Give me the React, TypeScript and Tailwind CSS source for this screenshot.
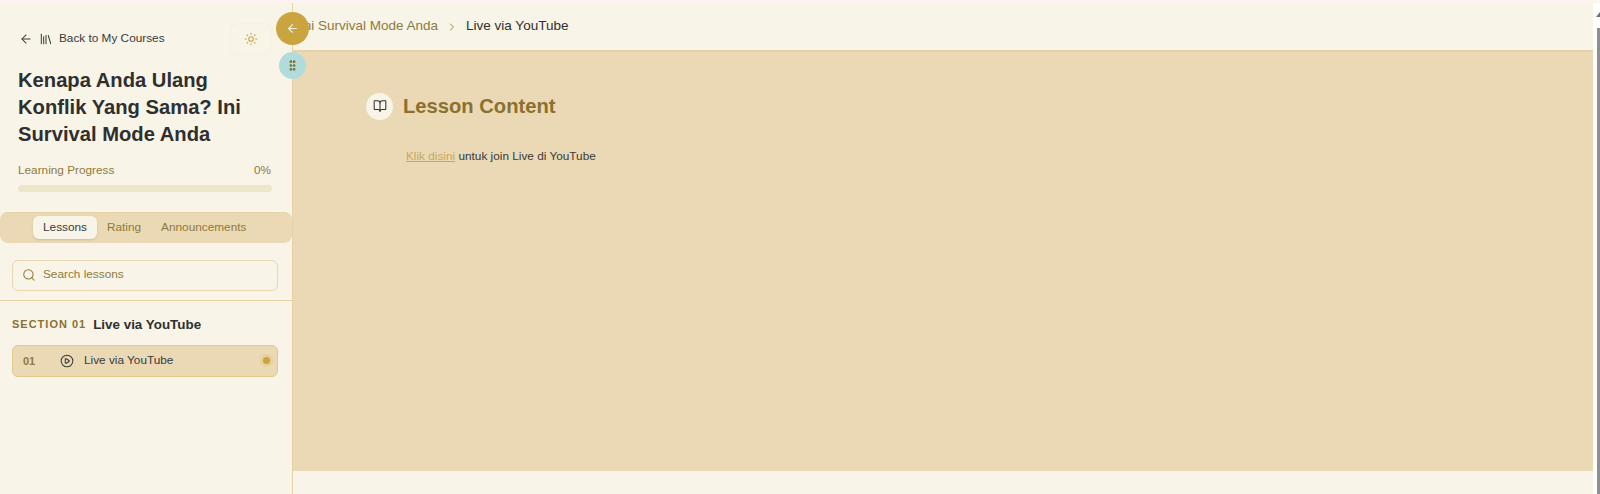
import React from "react";
import { ArrowLeft, Library, Sun, GripVertical, BookOpen, ChevronRight, Search, CirclePlay } from "lucide-react";

export default function App() {
  return (
    <div className="relative flex h-[494px] w-[1600px] flex-col overflow-hidden bg-white font-['Liberation_Sans',Arial,sans-serif]">
      <div className="h-[3px] shrink-0 bg-[#fdf3f0]" />
      <div className="flex min-h-0 flex-1">
        <aside className="flex w-[293px] shrink-0 flex-col border-r border-[#e6d3a5] bg-[#f8f4e7]">
          <div className="flex items-center justify-between pl-[19px] pr-[21px] pt-[21px]">
            <div className="flex items-center text-[11.8px] text-[#3a3a3a]">
              <ArrowLeft className="h-[14px] w-[14px]" strokeWidth={1.75} />
              <Library className="ml-[6px] h-[14px] w-[14px]" strokeWidth={1.75} />
              <span className="ml-[6px]">Back to My Courses</span>
            </div>
            <div className="flex h-[30px] w-[40px] items-center justify-center rounded-md bg-[#f8f4e7] shadow-[0_0_2px_rgba(200,160,60,0.12)]">
              <Sun className="h-[14px] w-[14px] text-[#c9a43f]" strokeWidth={1.75} />
            </div>
          </div>
          <h1 className="mt-[13px] pl-[18px] pr-[21px] text-[20.2px] leading-[27px] font-bold text-[#2f2f2f]">
            Kenapa Anda Ulang Konflik Yang Sama? Ini Survival Mode Anda
          </h1>
          <div className="mt-[14px] flex justify-between pl-[18px] pr-[21px] text-[11.8px] text-[#8f7a3c]">
            <span>Learning Progress</span>
            <span>0%</span>
          </div>
          <div className="ml-[18px] mr-[20px] mt-[5px] h-[7px] rounded-full bg-[#efe5ca]" />
          <div className="mt-[20px] flex h-[31px] items-center rounded-lg border-t border-[#e6d3a5] bg-[#ead9b4] pl-[33px] text-[11.8px] text-[#8f7a3c]">
            <span className="flex h-[23px] w-[64px] items-center justify-center rounded-md bg-[#f8f4e7] text-[#3a3a3a] shadow-sm">Lessons</span>
            <span className="ml-[10px]">Rating</span>
            <span className="ml-[20px]">Announcements</span>
          </div>
          <div className="ml-[12px] mr-[14px] mt-[17px] flex h-[31px] items-center rounded-md border border-[#e8d8b2] pl-[9px] text-[11.8px] text-[#8f7a3c]">
            <Search className="h-[14px] w-[14px]" strokeWidth={1.75} />
            <span className="ml-[7px]">Search lessons</span>
          </div>
          <div className="mt-[9px] h-px bg-[#e6d3a5]" />
          <div className="mt-[14px] flex items-center pl-[12px]">
            <span className="text-[11px] font-bold tracking-[1px] text-[#8b7030]">SECTION 01</span>
            <span className="ml-[7px] text-[13.4px] font-bold text-[#2f2f2f]">Live via YouTube</span>
          </div>
          <div className="ml-[12px] mr-[14px] mt-[10px] flex h-[32px] items-center rounded-md border border-[#e3c98c] bg-[#ead9b4] pl-[10px] pr-[4px] text-[11.8px] text-[#3a3a3a]">
            <span className="w-[27px] text-[11px] font-bold text-[#8f7a3c]">01</span>
            <CirclePlay className="ml-[10px] h-[14px] w-[14px]" strokeWidth={1.75} />
            <span className="ml-[10px] flex-1">Live via YouTube</span>
            <span className="flex h-[13px] w-[13px] items-center justify-center rounded-full bg-[#e6d09b]">
              <span className="h-[7px] w-[7px] rounded-full bg-[#c9a43f]" />
            </span>
          </div>
        </aside>
        <main className="flex min-w-0 flex-1 flex-col bg-[#f8f4e7]">
          <div className="flex h-[49px] shrink-0 items-center border-b-2 border-[#e6d3a5] pl-[7px] text-[13.5px]">
            <span className="whitespace-nowrap text-[#8f7a3c]">Ini Survival Mode Anda</span>
            <ChevronRight className="mx-[8px] h-[12px] w-[12px] text-[#8f7a3c]" strokeWidth={1.75} />
            <span className="whitespace-nowrap text-[#2f2f2f]">Live via YouTube</span>
          </div>
          <div className="h-[419px] shrink-0 bg-[#ead9b4] pl-[73px] pt-[39px]">
            <div className="flex items-center">
              <span className="flex h-[27px] w-[27px] items-center justify-center rounded-full bg-[#f8f4e7]">
                <BookOpen className="h-[14px] w-[14px] text-[#2f2f2f]" strokeWidth={1.75} />
              </span>
              <h2 className="ml-[10px] text-[20.2px] font-bold text-[#8b7030]">Lesson Content</h2>
            </div>
            <p className="mt-[27px] pl-[40px] text-[11.8px] text-[#3a3a3a]">
              <a className="text-[#c9a85a] underline">Klik disini</a> untuk join Live di YouTube
            </p>
          </div>
        </main>
        <div className="w-[7px] shrink-0 bg-white" />
      </div>
      <button className="absolute left-[276px] top-[12px] flex h-[33px] w-[33px] items-center justify-center rounded-full bg-[#c9a43f]">
        <ArrowLeft className="h-[13px] w-[13px] text-[#f8f4e7]" strokeWidth={2} />
      </button>
      <button className="absolute left-[279px] top-[52px] flex h-[27px] w-[27px] items-center justify-center rounded-full bg-[#b1dcdc]">
        <GripVertical className="h-[13px] w-[13px] text-[#7a6a2e]" strokeWidth={3} />
      </button>
      <div className="absolute right-0 top-[28px] bottom-0 w-[3px] bg-[#8f8f8f]" />
      <svg className="absolute right-0 top-[12px] h-[5px] w-[4px]" viewBox="0 0 4 5">
        <path d="M4 0 L0 5 L4 5 Z" fill="#6f6f6f" />
      </svg>
    </div>
  );
}
